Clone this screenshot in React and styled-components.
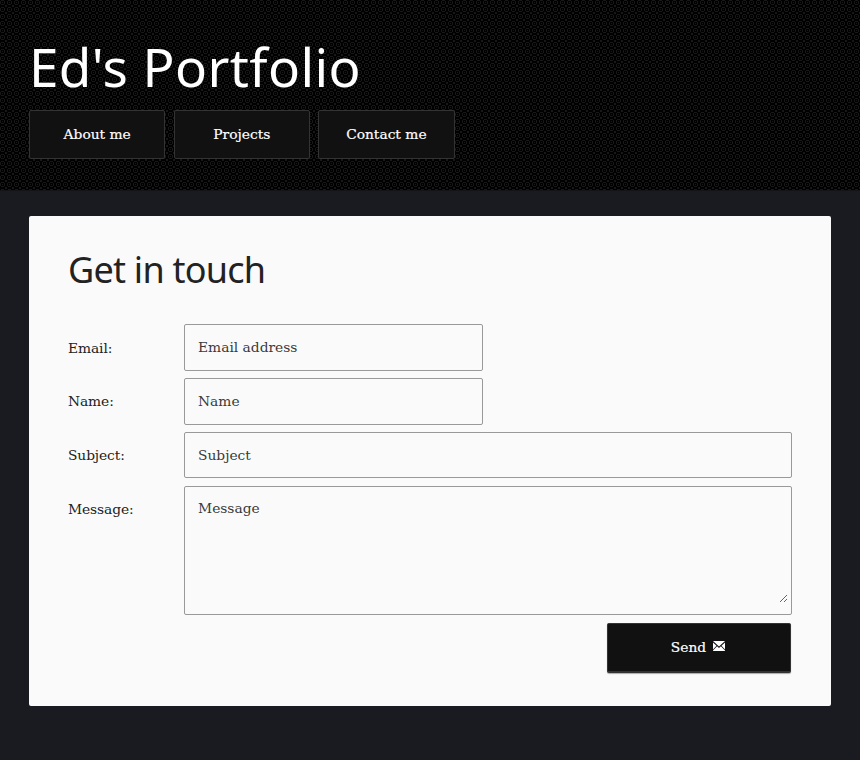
import React from "react";
import styled, { createGlobalStyle, css } from "styled-components";

const Global = createGlobalStyle`
  * { box-sizing: border-box; }
  html, body { margin: 0; background: #1a1b20; }
  body { font: 13.8px/20px "DejaVu Serif", serif; color: #222; overflow: hidden; }
  h1, h2 { margin: 0; font-family: "Noto Sans", sans-serif; font-weight: 400; white-space: nowrap; }
`;

const tile = encodeURIComponent(
  `<svg xmlns="http://www.w3.org/2000/svg" width="7" height="7" shape-rendering="crispEdges"><path fill="#000" d="M0 0h7v7H0z"/><path fill="#181818" d="M1 0h3v1H1zM1 4h3v1H1zM0 1h1v3H0zM4 1h1v3H4zM2 2h1v1H2zM5 5h2v2H5z"/></svg>`
);

const Page = styled.div`
  height: 760px;
  background: #1a1b20;
`;
const Header = styled.header`
  height: 191px;
  padding: 37px 29px 0;
  background: #000 url("data:image/svg+xml,${tile}") 0 0;
  border-bottom: 1px solid #141416;
`;
const Title = styled.h1`
  height: 73px;
  color: #fff;
  font-size: 53px;
  line-height: 60px;
  letter-spacing: 0.4px;
`;
const Nav = styled.nav`
  display: flex;
  gap: 8.2px;
`;
const NavLink = styled.a`
  width: 136.4px;
  height: 49px;
  border: 1px solid #333;
  border-radius: 2px;
  background: #111;
  color: #fff;
  line-height: 47px;
  text-align: center;
  -webkit-text-stroke: 0.2px #fff;
`;
const Panel = styled.main`
  width: 802px;
  height: 490px;
  margin: 25px 29px 0;
  padding: 32px 39px 0;
  border-radius: 2px;
  background: #fafafa;
`;
const Heading = styled.h2`
  height: 76px;
  font-size: 36px;
  line-height: 44px;
  letter-spacing: -0.75px;
`;
const Row = styled.div`
  display: grid;
  grid-template-columns: 116px 1fr;
  height: ${(p) => p.$height || 54}px;
`;
const Label = styled.label`
  padding-top: ${(p) => (p.$first ? 14 : 13)}px;
  letter-spacing: -0.1px;
`;
const Field = styled.div`
  width: ${(p) => (p.$short ? "299px" : "608px")};
  height: ${(p) => p.$height || 47}px;
  padding: ${(p) => (p.$area ? "11px 3px 11px 13px" : "0 13px 1px")};
  border: 1px solid #999;
  border-radius: 2px;
`;
const inputText = css`
  display: block;
  width: 100%;
  height: 100%;
  padding: 0;
  border: 0;
  outline: 0;
  background: transparent;
  font: inherit;
  color: #333;
  &::placeholder { color: #3b3b3b; opacity: 1; }
`;
const Input = styled.input`${inputText}`;
const Area = styled.textarea`
  ${inputText}
  resize: vertical;
`;
const Send = styled.button`
  display: flex;
  align-items: center;
  justify-content: center;
  gap: 7px;
  width: 184px;
  height: 50px;
  margin: 0 1px 0 auto;
  padding: 0 2px 1px 0;
  border: 1px solid #333;
  border-bottom-width: 2px;
  border-radius: 2px;
  box-shadow: 0 1px 1px #aaa;
  background: #111;
  color: #fff;
  font: inherit;
  -webkit-text-stroke: 0.2px #fff;
`;
const Icon = styled.svg`
  margin-top: -2px;
  stroke: none;
`;

function Envelope() {
  return (
    <Icon width="12" height="10" viewBox="0 0 12 10" fill="#fff">
      <path d="M0 0h12L6 5.6zM0 1.4l3.5 3.3L0 8.5zM12 1.4v7.1L8.5 4.7zM4.1 5.3L6 7l1.9-1.7L12 9.4v.6H0v-.6z" />
    </Icon>
  );
}

const links = ["About me", "Projects", "Contact me"];

export default function App() {
  return (
    <Page>
      <Global />
      <Header>
        <Title>Ed's Portfolio</Title>
        <Nav>{links.map((t) => <NavLink key={t}>{t}</NavLink>)}</Nav>
      </Header>
      <Panel>
        <Heading>Get in touch</Heading>
        <Row>
          <Label $first>Email:</Label>
          <Field $short><Input placeholder="Email address" /></Field>
        </Row>
        <Row>
          <Label>Name:</Label>
          <Field $short><Input placeholder="Name" /></Field>
        </Row>
        <Row>
          <Label>Subject:</Label>
          <Field $height={46}><Input placeholder="Subject" /></Field>
        </Row>
        <Row $height={137}>
          <Label>Message:</Label>
          <Field $area $height={129}><Area placeholder="Message" /></Field>
        </Row>
        <Send>Send <Envelope /></Send>
      </Panel>
    </Page>
  );
}
